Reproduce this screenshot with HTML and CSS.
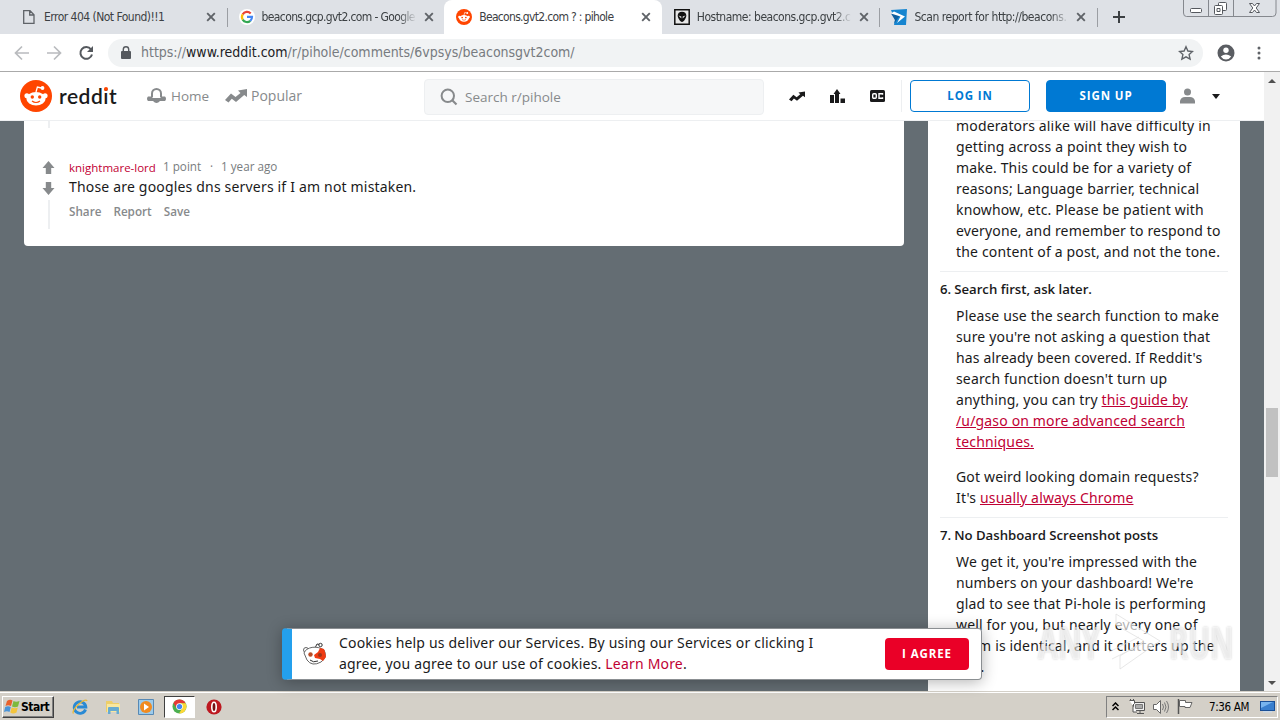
FILE: index.html
```html
<!DOCTYPE html>
<html lang="en">
<head>
<meta charset="utf-8">
<title>Beacons.gvt2.com ? : pihole</title>
<link rel="stylesheet" href="styles.css">
</head>
<body>
<svg width="0" height="0" class="defs">
  <defs>
    <symbol id="snoo" viewBox="0 0 32 32">
      <circle cx="16" cy="16" r="16" fill="#ff4500"/>
      <path d="M16 12l1.400-5 4 1" fill="none" stroke="#fff" stroke-width="1.300"/>
      <circle cx="22.500" cy="8" r="1.900" fill="#fff"/>
      <circle cx="6.900" cy="15.800" r="2.500" fill="#fff"/><circle cx="25.100" cy="15.800" r="2.500" fill="#fff"/>
      <ellipse cx="16" cy="18.700" rx="9.600" ry="6.700" fill="#fff"/>
      <circle cx="12.300" cy="17" r="1.700" fill="#ff4500"/><circle cx="19.700" cy="17" r="1.700" fill="#ff4500"/>
      <path d="M12 21q4 3 8 0" fill="none" stroke="#ff4500" stroke-width="1.200"/>
    </symbol>
    <symbol id="trend" viewBox="0 0 22 14"><path d="M0 11l6-6.500 4.500 3.500 5-4L13 1.500 22 0v8l-2.800-2L11 13 6.800 9.800 3.500 13.500z"/></symbol>
    <symbol id="cross" viewBox="0 0 10 10"><path d="M1.200 1.200l7.600 7.600M8.800 1.200L1.200 8.800" stroke="#5f6368" stroke-width="1.900"/></symbol>
    <symbol id="up" viewBox="0 0 12 13"><path d="M6 0l6 7H8.700v6H3.300V7H0z" fill="#878a8c"/></symbol>
    <symbol id="chrome" viewBox="0 0 16 16">
      <circle cx="8" cy="8" r="7.500" fill="#4caf50"/>
      <path d="M1.500 4.300A7.500 7.500 0 0 1 14.500 4.500H8L5 10z" fill="#e53935"/>
      <path d="M14.500 4.500A7.500 7.500 0 0 1 7.500 15.500L11 9.500 8 4.500z" fill="#fdd835"/>
      <circle cx="8" cy="8" r="3.600" fill="#fff"/><circle cx="8" cy="8" r="2.800" fill="#4285f4"/>
    </symbol>
  </defs>
</svg>
<div class="screen">
  <div class="tabs">
    <div class="tab"><svg class="fav" viewBox="0 0 16 16"><path d="M2.700 1.700h6.300l4 4v8.600H2.700zM8.700 2v4h4" fill="none" stroke="#5f6368" stroke-width="1.300"/></svg><span class="title t1">Error 404 (Not Found)!!1</span><svg class="close"><use href="#cross"/></svg></div>
    <div class="tab sep"><svg class="fav" viewBox="0 0 16 16"><circle cx="8" cy="8" r="8" fill="#fff"/><g fill="none" stroke-width="2.200"><path d="M3.700 5.400A5 5 0 0 1 11.700 4.500" stroke="#ea4335"/><path d="M3.700 5.400a5 5 0 0 0 0 5.200" stroke="#fbbc05"/><path d="M3.700 10.600a5 5 0 0 0 7.600 1.200" stroke="#34a853"/><path d="M11.300 11.800A5 5 0 0 0 13 7.900H8" stroke="#4285f4"/></g></svg><span class="title t2 fade">beacons.gcp.gvt2.com - Google</span><svg class="close"><use href="#cross"/></svg></div>
    <div class="tab active"><svg class="fav"><use href="#snoo"/></svg><span class="title t3">Beacons.gvt2.com ? : pihole</span><svg class="close"><use href="#cross"/></svg></div>
    <div class="tab"><svg class="fav" viewBox="0 0 16 16"><path d="M.8.800h14.400v14.400H.8z" fill="#e8e8e8" stroke="#111" stroke-width="1.500"/><path d="M8 2.800c2.700 0 4.300 1.500 4.300 3.700S10 13 8 13 3.700 8.700 3.700 6.500 5.300 2.800 8 2.800z" fill="#111"/><path d="M4.500 6.500l2.800 1v2zM11.500 6.500l-2.800 1v2z" fill="#eee"/></svg><span class="title t4 fade">Hostname: beacons.gcp.gvt2.c</span><svg class="close"><use href="#cross"/></svg></div>
    <div class="tab sep"><svg class="fav" viewBox="0 0 16 16"><path d="M0 1l16-1-1 16H3L4 11z" fill="#1685d0"/><path d="M0 4.500L9 6l-6 9 1-4z" fill="#0f5f9e"/><path d="M3 2.500l11 5-8 6.500 3.500-6.500L0 4.500z" fill="#fff"/><path d="M5 2.200l6 .3 2 3z" fill="#1685d0"/></svg><span class="title t5 fade">Scan report for http://beacons.</span><svg class="close"><use href="#cross"/></svg></div>
    <div class="newtab"><svg width="12" height="12"><path d="M6 0v12M0 6h12" stroke="#3c4043" stroke-width="2"/></svg></div>
    <svg class="winbtns" width="94" height="18" viewBox="0 0 94 18"><path d="M.5 0v13q0 3.500 3 3.500h86q3.500 0 3.500-3.500V0M25.500 0v16M50.500 0v16" fill="none" stroke="#85888e"/><g fill="#fff" stroke="#55585e"><rect x="7.500" y="8.500" width="11" height="4" rx="1"/><rect x="35.500" y="2.500" width="8" height="8" rx="1"/><rect x="31.500" y="5.500" width="8" height="9" rx="1"/><path d="M34 8.500h3v3h-3z"/><path d="M66.500 3.500h3l2 2.500 2-2.500h3l-3.300 4.500 3.300 4.500h-3l-2-2.500-2 2.500h-3l3.300-4.500z"/></g></svg>
  </div>
  <div class="toolbar">
    <svg class="nav" viewBox="0 0 100 20"><g fill="none" stroke="#b9bbbe" stroke-width="1.700"><path d="M29 10H16M22 3.500L15.500 10l6.500 6.500M47 10h13M54 3.500l6.500 6.500-6.500 6.500"/><path d="M91 6.300A5.900 5.900 0 1 0 92 11.500" stroke="#55595e" stroke-width="2"/></g><path d="M93 3v6h-6z" fill="#55595e"/></svg>
    <div class="omnibox">
      <svg width="10" height="14" viewBox="0 0 10 14"><path d="M1 5h8q1 0 1 1v6q0 1-1 1H1q-1 0-1-1V6q0-1 1-1z" fill="#55595e"/><path d="M2.300 6V3.500a2.700 2.700 0 0 1 5.400 0V6" fill="none" stroke="#55595e" stroke-width="1.400"/></svg>
      <span class="url">https://<b>www.reddit.com</b>/r/pihole/comments/6vpsys/beaconsgvt2com/</span>
      <svg class="star" width="16" height="16" viewBox="0 0 16 16"><path d="M8 1.800l1.900 4.200 4.600.5-3.400 3.100 1 4.500L8 11.800l-4.100 2.300 1-4.500L1.500 6.500 6.100 6z" fill="none" stroke="#5f6368" stroke-width="1.400"/></svg>
    </div>
    <svg width="18" height="18" viewBox="0 0 18 18"><circle cx="9" cy="9" r="8.500" fill="#5a5d62"/><circle cx="9" cy="6.200" r="2.700" fill="#fff"/><path d="M3.800 12.500q5-3.800 10.400 0-2 3-5.200 3t-5.200-3z" fill="#fff"/></svg>
    <svg class="dots" width="4" height="14" viewBox="0 0 4 14"><g fill="#5f6368"><circle cx="2" cy="2" r="1.500"/><circle cx="2" cy="7" r="1.500"/><circle cx="2" cy="12" r="1.500"/></g></svg>
  </div>
  <div class="viewport">
    <div class="page">
      <header class="header">
        <svg class="logo"><use href="#snoo"/></svg>
        <span class="word">redd<span class="idot">i<i></i></span>t</span>
        <svg class="homeicon" width="19" height="16" viewBox="0 0 19 16"><path d="M5 9.500V5.500a4.500 4.500 0 0 1 9 0v4" fill="none" stroke="#878a8c" stroke-width="2"/><path d="M1 8.500h4v1.500h9V8.500h4q2 2.200 0 4.500h-5q-3.500 4-7 0H1q-2-2.300 0-4.500z" fill="#878a8c"/></svg>
        <span class="navtext home">Home</span>
        <svg class="popicon" fill="#878a8c"><use href="#trend"/></svg>
        <span class="navtext pop">Popular</span>
        <div class="search"><svg width="18" height="18" viewBox="0 0 18 18"><path d="M12.500 12.500L16.500 16.500" stroke="#878a8c" stroke-width="2.200"/><circle cx="7.800" cy="7.800" r="6.200" fill="none" stroke="#878a8c" stroke-width="2"/></svg><span>Search r/pihole</span></div>
        <svg class="i-trend" fill="#1a1a1b"><use href="#trend"/></svg>
        <svg class="i-bars" width="15" height="14" viewBox="0 0 15 14"><path d="M0 6h4v8H0zM5 14V5H3.500L7 0l3.500 5H9v9zM10.500 9.500H15V14h-4.500z" fill="#1a1a1b"/></svg>
        <svg class="i-cc" width="15" height="12" viewBox="0 0 15 12"><rect width="15" height="12" rx="1.500" fill="#1a1a1b"/><rect x="2.700" y="3.700" width="3.600" height="4.600" rx="1" fill="none" stroke="#fff" stroke-width="1.400"/><path d="M12.500 4.800V3.700H9v4.600h3.500V7.200" fill="none" stroke="#fff" stroke-width="1.400"/></svg>
        <div class="rule"></div>
        <a class="btn outline"><span>LOG IN</span></a>
        <a class="btn solid"><span>SIGN UP</span></a>
        <svg class="person" width="15" height="16" viewBox="0 0 15 16"><circle cx="7.500" cy="4" r="3.500" fill="#878a8c"/><path d="M0 15.500V13q1-4 5-4h5q4 0 5 4v2.500z" fill="#878a8c"/></svg>
        <svg class="caret" width="8" height="5"><path d="M0 0h8L4 5z" fill="#1a1a1b"/></svg>
      </header>
      <main class="content">
        <article class="post">
          <div class="stub"></div>
          <div class="comment">
            <div class="votes"><svg><use href="#up"/></svg><svg class="down"><use href="#up"/></svg><div class="thread"></div></div>
            <div class="body">
              <div class="meta"><a>knightmare-lord</a><span class="points">1 point</span><span class="dot">·</span><span class="age">1 year ago</span></div>
              <p class="reply">Those are googles dns servers if I am not mistaken.</p>
              <div class="actions"><span>Share</span><span>Report</span><span>Save</span></div>
            </div>
          </div>
        </article>
        <aside class="rules">
          <section class="first"><p>moderators alike will have difficulty in<br>getting across a point they wish to<br>make. This could be for a variety of<br>reasons; Language barrier, technical<br>knowhow, etc. Please be patient with<br>everyone, and remember to respond to<br>the content of a post, and not the tone.</p></section>
          <section><h3>6.<span>Search first, ask later.</span></h3>
            <p>Please use the search function to make<br>sure you're not asking a question that<br>has already been covered. If Reddit's<br>search function doesn't turn up<br>anything, you can try <a>this guide by<br>/u/gaso on more advanced search<br>techniques.</a></p>
            <p>Got weird looking domain requests?<br>It's <a>usually always Chrome</a></p></section>
          <section class="last"><h3>7.<span>No Dashboard Screenshot posts</span></h3>
            <p>We get it, you're impressed with the<br>numbers on your dashboard! We're<br>glad to see that Pi-hole is performing<br>well for you, but nearly every one of<br>them is identical, and it clutters up the<br>sub.</p></section>
        </aside>
      </main>
    </div>
    <div class="scrollbar"><svg width="8" height="4"><path d="M0 4h8L4 0z" fill="#505050"/></svg><div class="thumb"></div><svg width="8" height="4"><path d="M0 0h8L4 4z" fill="#505050"/></svg></div>
  </div>
  <div class="taskbar">
    <div class="start"><svg width="16" height="15" viewBox="0 0 16 15"><path d="M3 2q3-2 5.500-.5L7 7Q4 5.500 1.500 7z" fill="#e8612c"/><path d="M9.500 2Q12 3.500 15.500 2L14 7.500Q11 9 8 7.500z" fill="#7db93c"/><path d="M1.200 8Q4 6.500 6.800 8L5.500 13Q3 11.500 0 13z" fill="#4a94d8"/><path d="M7.700 8.500Q11 10 13.800 8.500L12.500 13.500Q9 15.500 6.300 13.500z" fill="#f3c43d"/></svg><span>Start</span></div>
    <svg class="q" viewBox="0 0 16 16"><path d="M13.500 10.500A5.800 5.800 0 1 1 13.800 8H5" fill="none" stroke="#2a8ad4" stroke-width="2.900"/><path d="M1.500 14.500C-1.500 12 12-2 15.200 1.800" fill="none" stroke="#e8b83a" stroke-width="1.300"/></svg>
    <svg class="q" viewBox="0 0 16 16"><path d="M1 2h6l1 2h6v9H1z" fill="#edce69"/><path d="M2 5h13v8H2z" fill="#f8e79f"/><path d="M3 15V9q0-1 1-1h9q1 0 1 1v6h-2.500v-3h-6v3z" fill="#67abd1"/></svg>
    <svg class="q" viewBox="0 0 16 16"><path d="M.5.500h15v15H.5z" fill="#9ccbeb" stroke="#5789b5"/><circle cx="8" cy="8" r="6" fill="#f18b20"/><path d="M6 4.500l5 3.500-5 3.500z" fill="#fff"/></svg>
    <div class="running"><svg width="15" height="15"><use href="#chrome"/></svg></div>
    <svg class="q opera" viewBox="0 0 16 16"><circle cx="8" cy="8" r="7.600" fill="#bd1820"/><ellipse cx="8" cy="8" rx="2.200" ry="4.700" fill="#751014" stroke="#fff" stroke-width="1.600"/></svg>
    <div class="tray">
      <svg width="7" height="9" viewBox="0 0 7 9"><path d="M.5 4l3-3 3 3M.5 8l3-3 3 3" fill="none" stroke="#000" stroke-width="1.500"/></svg>
      <svg class="net" width="16" height="15" viewBox="0 0 16 15"><path d="M4.500 3.500h11v8h-11zM8 14.500h7M11 12v2" fill="#eee" stroke="#555"/><path d="M6.500 5.500h7v4h-7z" fill="#aaa" stroke="#777"/><path d="M.5 1.500h5v3L4 6v7h4" fill="#fff" stroke="#555"/><path d="M1.500 0v2M4.500 0v2" stroke="#555"/></svg>
      <svg class="vol" width="16" height="14" viewBox="0 0 16 14"><path d="M.5 4.500h3l4-4v13l-4-4h-3z" fill="#fff" stroke="#666"/><path d="M9.500 4q2 3 0 6M11.500 2.500q3 4.500 0 9M13.500 1q4 6 0 12" fill="none" stroke="#777"/></svg>
      <svg class="flag" width="16" height="15" viewBox="0 0 16 15"><path d="M1.500 0v15" stroke="#555" stroke-width="1.500"/><path d="M2.500 1.500h6v2h6.500l-2 5H8v-1H2.500z" fill="#fff" stroke="#666"/></svg>
      <span class="clock">7:36 AM</span>
      <svg width="15" height="13" viewBox="0 0 15 13"><path d="M0 1h15v10H0z" fill="#194f96"/><path d="M1 2h13v8H1z" fill="#397fce"/><path d="M1 2h12L1 8z" fill="#77b4ee"/><path d="M3 11h9v1.500H3z" fill="#ccd9e6"/></svg>
    </div>
  </div>
  <div class="cookie">
    <svg width="26" height="24" viewBox="0 0 26 24"><path d="M13 6l2-4 5 1" fill="none" stroke="#333"/><circle cx="18.500" cy="3" r="1.700" fill="#fff" stroke="#333"/><circle cx="4" cy="8" r="2.500" fill="#fff" stroke="#666"/><path d="M2 11C4 5 15 3 22 8q4 7-3 12-9 5-14-2z" fill="#fff" stroke="#666"/><path d="M12 13l4-3 2-4 4 1 1 3 1 5-3 4-3-2-5-1z" fill="#ef3b12"/><circle cx="8.500" cy="12.500" r="2.200" fill="#b84d27"/><circle cx="18" cy="13" r="2" fill="#9b3519"/><path d="M8 18q3 3 8 1" fill="none" stroke="#333"/></svg>
    <p>Cookies help us deliver our Services. By using our Services or clicking I<br>agree, you agree to our use of cookies. <a>Learn More</a>.</p>
    <a class="agree"><span>I AGREE</span></a>
  </div>
  <div class="watermark"><span>ANY</span><svg width="58" height="60" viewBox="0 0 58 60"><path d="M8 2l44 27L12 57V44l24-15L8 13z" fill="#fff" fill-opacity=".65" stroke="#ddd" stroke-opacity=".7"/><path d="M1 40l30-15M4 47l30-15" stroke="#ddd" stroke-opacity=".7"/></svg><span>RUN</span></div>
</div>
</body>
</html>
```
FILE: styles.css
```css
* { box-sizing: border-box; }
body { margin: 0; width: 1280px; height: 720px; overflow: hidden; background: #fff; font-family: "Noto Sans", sans-serif; }
svg { display: block; flex: none; }
p, h3 { margin: 0; }
.defs { position: absolute; }
.screen { position: relative; width: 1280px; height: 720px; display: flex; flex-direction: column; overflow: hidden; white-space: nowrap; }

.tabs { height: 34px; flex: none; background: #dee1e6; display: flex; padding-left: 9px; position: relative; }
.tab { width: 217.600px; height: 34px; flex: none; display: flex; align-items: center; padding-left: 12px; position: relative; }
.tab.sep::before, .newtab::before { content: ""; position: absolute; left: 0; top: 8px; width: 1px; height: 19px; background: #9b9ea3; }
.tab.active { background: #fff; border-radius: 8px 8px 0 0; }
.fav { width: 16px; height: 16px; margin-right: 7px; }
.title { width: 155px; font: 12px/18px "DejaVu Sans Condensed", "DejaVu Sans", sans-serif; font-stretch: condensed; color: #3c4043; letter-spacing: -0.520px; }
.t2 { letter-spacing: -0.620px; }
.t3 { letter-spacing: -0.680px; }
.t4 { letter-spacing: -0.500px; }
.t5 { letter-spacing: -0.450px; }
.fade { -webkit-mask-image: linear-gradient(90deg, #000 88%, transparent 100%); mask-image: linear-gradient(90deg, #000 88%, transparent 100%); }
.close { width: 10px; height: 10px; margin-left: 7px; }
.newtab { position: relative; padding: 11px 0 0 16px; }
.winbtns { position: absolute; right: 3px; top: 0; }

.toolbar { height: 38px; flex: none; background: #fff; border-bottom: 1px solid #aaa; display: flex; align-items: center; }
.nav { width: 100px; height: 20px; }
.omnibox { margin-left: 8px; width: 1095px; height: 28px; border-radius: 14px; background: #f1f3f4; display: flex; align-items: center; padding: 0 9px 0 13px; margin-right: 14px; }
.url { margin-left: 10px; padding-bottom: 2px; font: 14px/20px "DejaVu Sans Condensed", "DejaVu Sans", sans-serif; font-stretch: condensed; color: #777b80; letter-spacing: -0.010px; }
.url b { font-weight: 400; color: #202124; }
.star { margin-left: auto; }
.dots { margin-left: 22px; }

.viewport { height: 619px; flex: none; display: flex; }
.page { width: 1264px; height: 619px; display: flex; flex-direction: column; background: #646d73; overflow: hidden; }
.header { height: 49px; flex: none; background: #fff; border-bottom: 1px solid #edeff1; display: flex; align-items: center; padding-left: 20px; font-family: "Open Sans", sans-serif; }
.logo { width: 32px; height: 32px; }
.word { width: 59px; margin-left: 7px; font: 600 21px/28px Lato, sans-serif; color: #1a1a1b; letter-spacing: 0.500px; }
.idot { position: relative; }
.idot i { position: absolute; width: 4px; height: 4px; border-radius: 2px; background: #ff4500; left: 1px; top: 4px; }
.homeicon { margin-left: 29px; }
.navtext { font-size: 14px; line-height: 20px; color: #878a8c; }
.home { margin-left: 5px; width: 39px; font-size: 13.500px; }
.popicon { width: 22px; height: 14px; margin-left: 15px; }
.pop { margin-left: 4px; width: 50px; }
.search { width: 340px; height: 36px; margin-left: 123px; margin-top: 1px; background: #f6f7f8; border: 1px solid #edeff1; border-radius: 4px; display: flex; align-items: center; padding-left: 15px; gap: 7px; font-size: 13.500px; color: #878a8c; }
.i-trend { width: 16px; height: 11px; margin-left: 25px; }
.i-bars { margin-left: 25px; }
.i-cc { margin-left: 25px; }
.rule { margin-left: 16px; width: 1px; height: 32px; background: #edeff1; }
.btn { width: 120px; height: 32px; border: 1px solid #0079d3; border-radius: 4px; display: flex; align-items: center; justify-content: center; font: 700 11.500px/20px "Open Sans", sans-serif; letter-spacing: 0.900px; }
.outline { margin-left: 8px; color: #0079d3; }
.solid { margin-left: 16px; color: #fff; background: #0079d3; }
.person { margin-left: 14px; }
.caret { margin-left: 17px; }

.content { height: 570px; flex: none; display: flex; align-items: flex-start; padding: 0 24px; gap: 24px; }
.post { width: 880px; height: 125px; background: #fff; border-radius: 0 0 4px 4px; }
.stub { width: 2px; height: 7px; margin-left: 24px; background: #edeff1; }
.comment { display: flex; padding: 29px 0 0 18px; }
.votes { width: 13px; display: flex; flex-direction: column; align-items: center; padding-top: 4px; }
.votes svg { width: 13px; height: 13px; }
.votes .down { margin-top: 8px; transform: scaleY(-1); }
.thread { width: 2px; height: 29px; margin-top: 5px; background: #edeff1; }
.body { margin-left: 14px; }
.meta { height: 19px; display: flex; align-items: center; font: 11.700px/19px "Open Sans", sans-serif; color: #787c7e; }
.meta a { color: #bf0034; width: 94px; font-size: 11.500px; padding-top: 1px; }
.points { width: 47px; }
.dot { width: 11px; }
.reply { font-size: 14px; line-height: 21px; color: #1a1a1b; letter-spacing: 0.180px; }
.actions { display: flex; gap: 12px; margin-top: 5px; font: 600 11.700px/19px "Open Sans", sans-serif; color: #878a8c; }

.rules { width: 312px; height: 570px; background: #fff; padding: 0 12px; overflow: hidden; color: #1a1a1b; }
.rules section { border-bottom: 1px solid #edeff1; padding-bottom: 9px; }
.rules section p { padding-left: 16px; font-size: 14px; line-height: 21px; letter-spacing: 0.160px; }
.rules section p + p { margin-top: 14px; }
.rules .first { margin-top: -6px; }
.rules .last { border-bottom: 0; }
.rules a { color: #bf0034; text-decoration: underline; }
.rules h3 { font: 600 13.200px/18px "Open Sans", sans-serif; padding: 8px 0 7px; }
.rules h3 span { margin-left: 3px; }

.scrollbar { width: 16px; background: #f1f1f1; display: flex; flex-direction: column; align-items: center; padding: 7px 0 6px; }
.thumb { width: 12px; height: 69px; background: #c1c1c1; margin: 325px 0 auto; }

.taskbar { margin-top: 1px; height: 28px; background: #d4d0c8; border-top: 1px solid #fff; box-shadow: 0 -1px #d4d0c8; display: flex; align-items: center; padding: 0 2px; }
.start { width: 52px; height: 22px; border: 1px solid; border-color: #fff #404040 #404040 #fff; box-shadow: inset -1px -1px #808080; display: flex; align-items: center; padding-left: 1px; gap: 1px; font: 700 12px/18px "DejaVu Sans Condensed", "DejaVu Sans", sans-serif; font-stretch: condensed; color: #000; letter-spacing: -0.500px; }
.q { width: 16px; height: 16px; margin-left: 17px; }
.start + .q { margin-left: 18px; }
.running { margin-left: 10px; width: 31px; height: 22px; background: #fff; border: 1px solid; border-color: #404040 #fff #fff #404040; display: flex; align-items: center; justify-content: center; }
.opera { margin-left: 11px; }
.tray { margin-left: auto; width: 172px; height: 22px; border: 1px solid; border-color: #808080 #fff #fff #808080; display: flex; align-items: center; padding-left: 5px; }
.net { margin-left: 10px; }
.vol { margin-left: 8px; }
.flag { margin-left: 8px; }
.clock { margin-left: 16px; width: 51px; font: 11.500px/18px "DejaVu Sans Condensed", "DejaVu Sans", sans-serif; font-stretch: condensed; color: #000; letter-spacing: -0.350px; }

.cookie { position: absolute; left: 282px; top: 628px; width: 700px; height: 52px; background: #fff; border: 1px solid #8b8f92; border-left: 10px solid #24a0ed; border-radius: 4px; box-shadow: 0 2px 15px rgba(0, 0, 0, 0.300); display: flex; align-items: center; padding: 0 12px 0 10px; font-size: 14px; line-height: 21px; color: #1a1a1b; z-index: 2; }
.cookie p { margin: -2px 0 0 11px; letter-spacing: 0.190px; }
.cookie p a { color: #bf0034; }
.agree { margin-left: auto; width: 84px; height: 32px; border-radius: 4px; background: #ea0027; color: #fff; font: 700 11.500px/32px "Open Sans", sans-serif; letter-spacing: 0.900px; text-align: center; }
.watermark { position: absolute; left: 1038px; top: 612px; display: flex; align-items: center; font: 700 44px/60px "Open Sans", sans-serif; color: rgba(255, 255, 255, 0.600); text-shadow: 0 0 3px rgba(0, 0, 0, 0.200); z-index: 3; }
.watermark span { display: block; width: 70px; transform: scaleX(0.660); transform-origin: left; }
.watermark svg { margin: 0 3px 0 0; }
```
